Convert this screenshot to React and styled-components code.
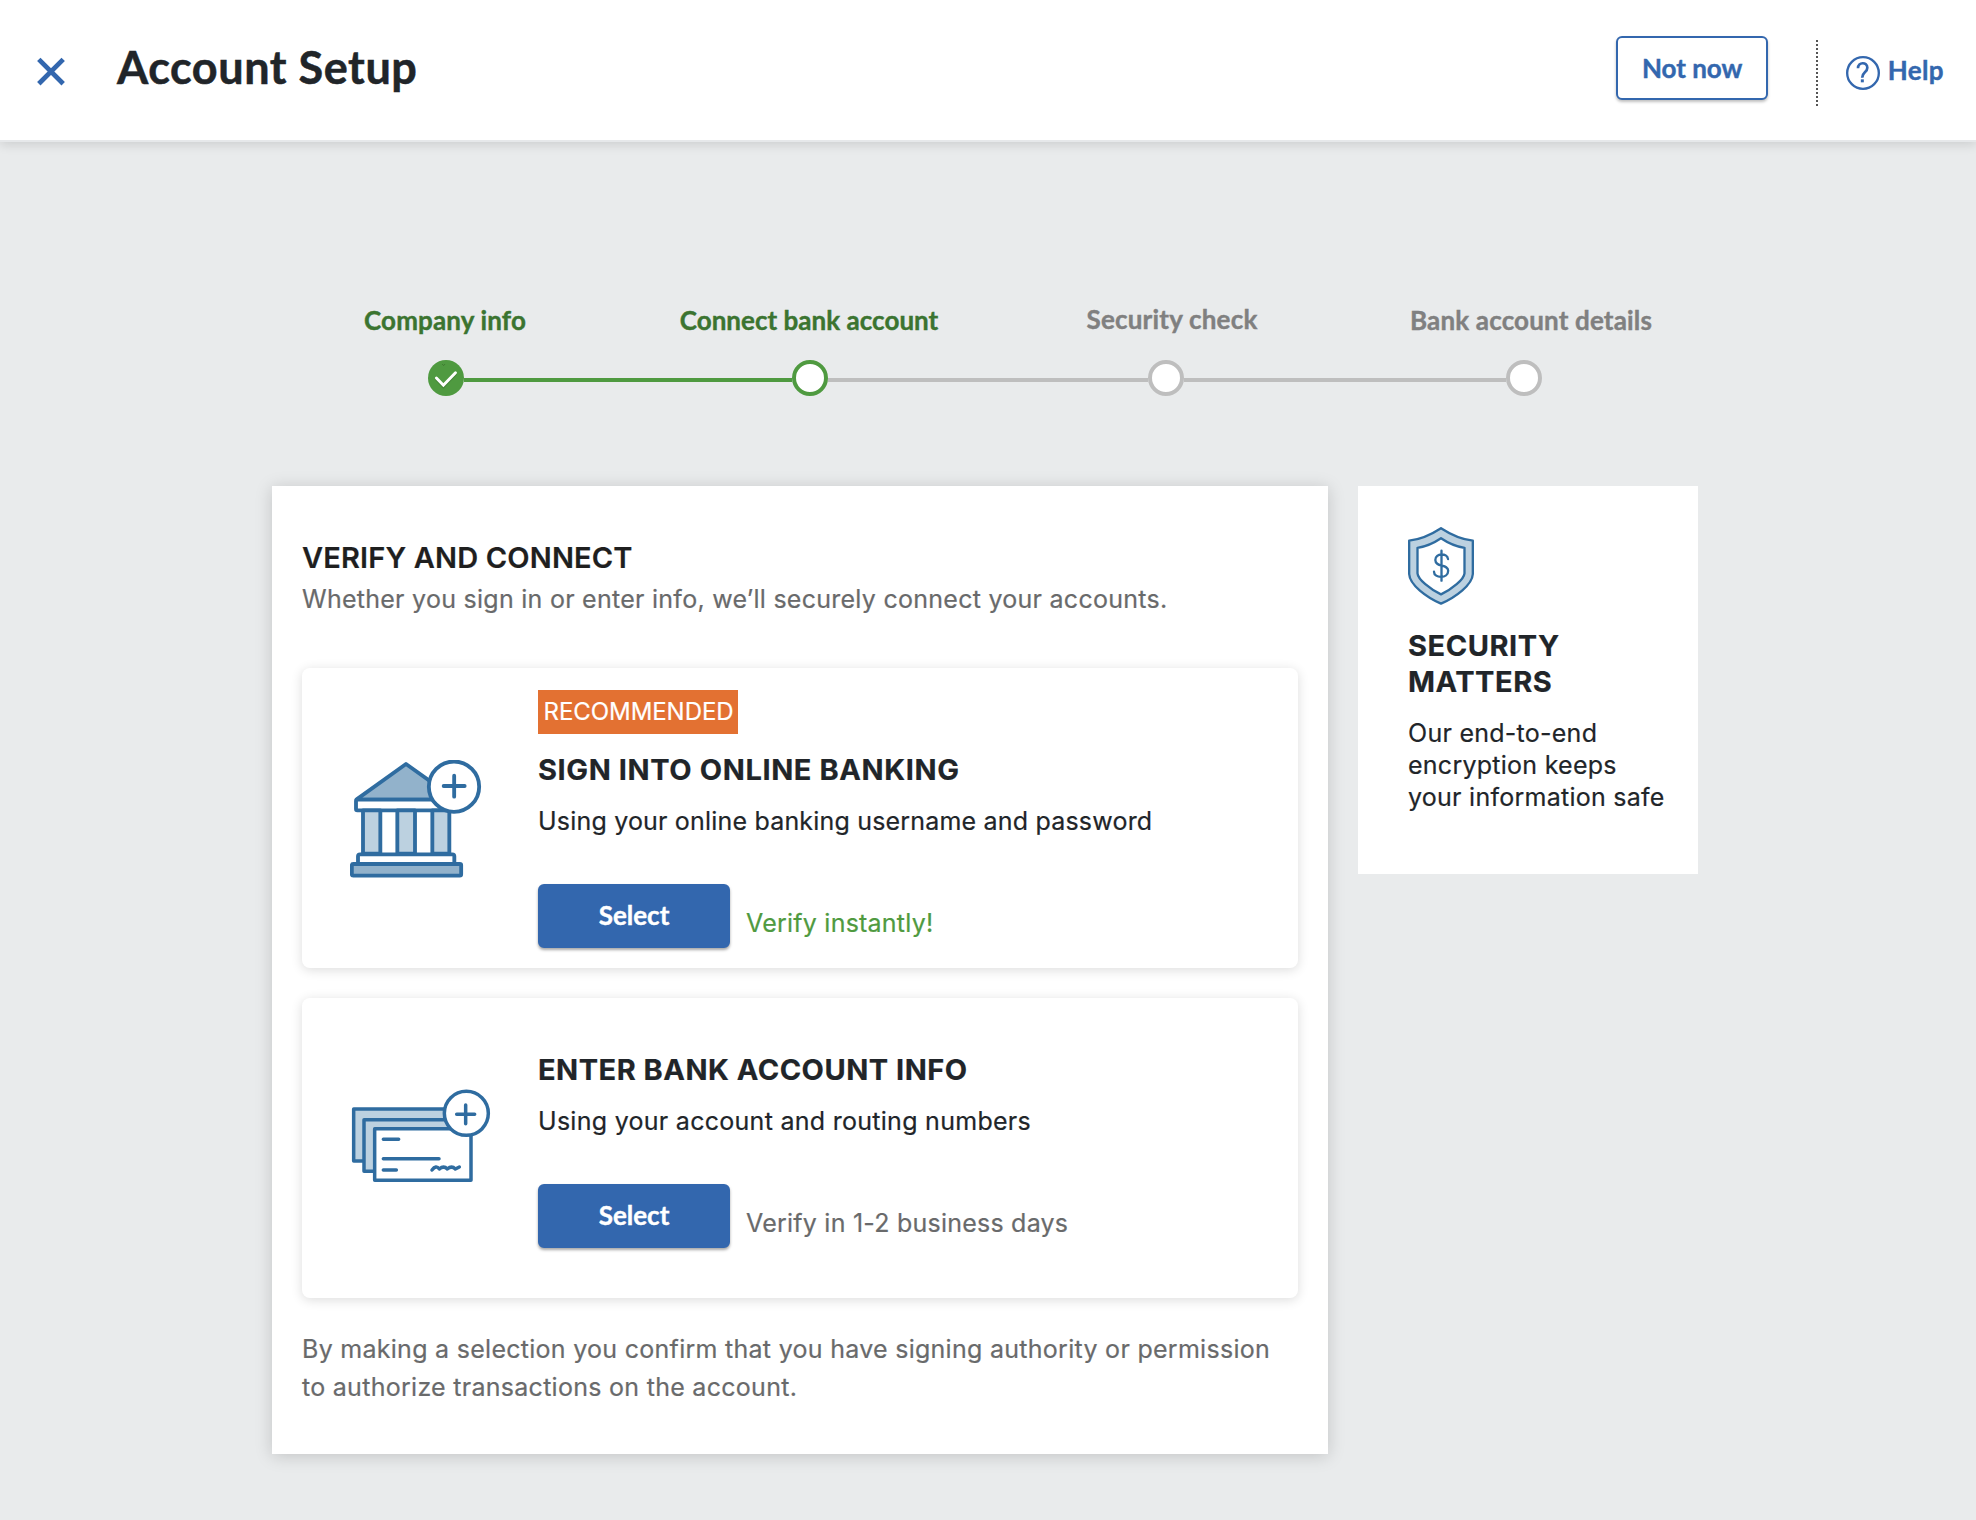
import React, { Fragment } from "react";
import styled, { createGlobalStyle, css } from "styled-components";

const color = {
  page: "#e9ebec",
  ink: "#212529",
  muted: "#696a6b",
  blue: "#3367ae",
  green: "#4f9a40",
  greenDark: "#3b7430",
  rail: "#bebebe",
  railText: "#808080",
  orange: "#e37132",
  iconLine: "#2f6ca0",
  iconMid: "#92b2cb",
  iconLight: "#bcd1e0",
};

const lato = `Lato, "Open Sans", sans-serif`;
const inter = `Inter, "Liberation Sans", sans-serif`;

const GlobalStyle = createGlobalStyle`
  * { box-sizing: border-box; }
  body { margin: 0; background: ${color.page}; }
  h1, h2, h3, p, ol { margin: 0; padding: 0; }
  button { font: inherit; cursor: pointer; }
  svg { display: block; flex: none; }
`;

const Page = styled.div`
  min-height: 1520px;
  background: ${color.page};
  color: ${color.ink};
  font-family: ${inter};
  -webkit-text-stroke: 0.2px;
`;

/* ---------- Header ---------- */

const Header = styled.header`
  display: flex;
  align-items: flex-start;
  height: 142px;
  padding: 0 32px 0 37px;
  background: #fff;
  border-bottom: 2px solid #e6e8ea;
  box-shadow: 0 3px 10px rgba(0, 0, 0, 0.12);
`;

const CloseButton = styled.button`
  margin: 57px 0 0;
  padding: 0;
  border: 0;
  background: none;
`;

const PageTitle = styled.h1`
  margin: 40px auto 0 52px;
  font: 700 45px/54px ${lato};
  letter-spacing: 0.55px;
  -webkit-text-stroke: 0.5px;
`;

const buttonBase = css`
  height: 64px;
  padding: 0 0 0 1px;
  border: 2px solid ${color.blue};
  border-radius: 6px;
  font: 700 26px/32px ${lato};
  -webkit-text-stroke: 0.4px;
`;

const OutlineButton = styled.button`
  ${buttonBase}
  width: 152px;
  margin-top: 36px;
  background: #fff;
  color: ${color.blue};
  box-shadow: 0 2px 3px rgba(0, 0, 0, 0.25);
`;

const SelectButton = styled.button`
  ${buttonBase}
  width: 192px;
  padding: 0 0 3px;
  background: ${color.blue};
  color: #fff;
  box-shadow: 0 2px 3px rgba(0, 0, 0, 0.35);
`;

const Divider = styled.span`
  width: 2px;
  height: 66px;
  margin: 40px 28px 0 48px;
  background: repeating-linear-gradient(#555 0 2px, transparent 2px 4px);
`;

const HelpLink = styled.a`
  display: flex;
  gap: 8px;
  margin-top: 54px;
  color: ${color.blue};
  font: 700 26px/32px ${lato};
  letter-spacing: 0.4px;
  -webkit-text-stroke: 0.4px;

  svg { margin-top: 2px; }
`;

/* ---------- Stepper ---------- */

const Stepper = styled.ol`
  display: flex;
  align-items: flex-start;
  list-style: none;
  margin: 162px 0 0 428px;
`;

const Step = styled.li`
  display: flex;
  flex-direction: column;
  align-items: center;
  flex: none;
  width: 36px;
`;

const StepLabel = styled.span`
  margin-top: ${(p) => -(p.$lift || 0)}px;
  margin-bottom: ${(p) => 24 + (p.$lift || 0)}px;
  margin-left: ${(p) => (p.$nudge || 0) * 2}px;
  color: ${(p) => (p.$reached ? color.greenDark : color.railText)};
  font: 700 26px/32px ${lato};
  letter-spacing: ${(p) => p.$tracking}px;
  white-space: nowrap;
  -webkit-text-stroke: 0.4px;
`;

const StepDot = styled.span`
  display: block;
  width: 36px;
  height: 36px;
  border: 4px solid ${(p) => (p.$reached ? color.green : color.rail)};
  border-radius: 50%;
  background: #fff;
`;

const Connector = styled.li`
  flex: none;
  width: ${(p) => p.$width}px;
  height: 4px;
  margin-top: 74px;
  background: ${(p) => (p.$reached ? color.green : color.rail)};
`;

/* ---------- Panels ---------- */

const Columns = styled.main`
  display: flex;
  align-items: flex-start;
  gap: 30px;
  margin: 90px 0 0 272px;
`;

const Panel = styled.section`
  width: 1056px;
  height: 968px;
  padding: 54px 30px 0;
  background: #fff;
  box-shadow: 0 2px 16px rgba(0, 0, 0, 0.17);
`;

const Heading = styled.h2`
  color: #1f1f1f;
  font: 600 29px/36px ${inter};
  letter-spacing: 0.16px;
`;

const Text = styled.p`
  color: ${(p) => p.$color || color.ink};
  font: 400 25px/32px ${inter};
  letter-spacing: ${(p) => p.$tracking ?? 0.23}px;
  white-space: nowrap;
`;

const Intro = styled(Text)`
  margin: 7px 0 53px;
`;

const Disclaimer = styled(Text)`
  margin-top: 32px;
  line-height: 38px;
`;

const OptionCard = styled.article`
  display: flex;
  align-items: flex-start;
  height: 300px;
  border-radius: 8px;
  background: #fff;
  box-shadow: 0 2px 12px rgba(0, 0, 0, 0.14);

  & + & { margin-top: 30px; }
`;

const OptionIcon = styled.div`
  flex: none;
  width: 236px;
  padding: ${(p) => p.$top}px 0 0 48px;
`;

const OptionBody = styled.div`
  padding-top: ${(p) => (p.$badged ? 22 : 54)}px;
`;

const Badge = styled.span`
  display: flex;
  align-items: center;
  width: 200px;
  height: 44px;
  margin-bottom: 18px;
  padding: 0 0 2px 5.5px;
  background: ${color.orange};
  color: #fff;
  font: 400 24px/29px ${inter};
  letter-spacing: -0.06px;
`;

const OptionTitle = styled.h3`
  margin-bottom: 17px;
  font: 700 29px/36px ${inter};
  letter-spacing: ${(p) => p.$tracking}px;
  white-space: nowrap;
`;

const OptionAction = styled.div`
  display: flex;
  align-items: flex-start;
  gap: 16px;
  margin-top: 47px;

  ${Text} { margin-top: 23px; }
`;

const SideCard = styled.aside`
  width: 340px;
  height: 388px;
  padding: 41px 0 0 50px;
  background: #fff;
`;

const SideTitle = styled(OptionTitle)`
  margin-top: 23px;
`;

/* ---------- Drawings ---------- */

const CloseIcon = () => (
  <svg width="28" height="29" viewBox="0 0 28 29" fill="none" stroke={color.blue} strokeWidth="4.8">
    <path d="M1.8 2.4 26.2 26.8M26.2 2.4 1.8 26.8" />
  </svg>
);

const HelpIcon = () => (
  <svg width="34" height="34" viewBox="0 0 102 102" fill="none" stroke={color.blue}>
    <circle cx="51" cy="51" r="47.5" strokeWidth="7" />
    <path d="M36 37C36 17 64 17 64 35 64 50 48.500 48 48.500 65" strokeWidth="8" />
    <path d="M44.500 74.500h9" strokeWidth="9" />
  </svg>
);

const CheckDot = () => (
  <svg width="36" height="36" viewBox="0 0 36 36" fill="none" strokeWidth="2.900" strokeLinecap="round">
    <circle cx="18" cy="18" r="18" fill={color.green} />
    <path d="M8.400 19.200 15.400 26.600 27.500 14" stroke="#3a742f" opacity=".6" />
    <path d="M14.600 4.500 15.600 5.500 16.600 4.500" stroke="#3a742f" strokeWidth="1" />
    <path d="M8.400 18 15.400 25.200 27.500 12.700" stroke="#fff" />
  </svg>
);

const BankIcon = () => (
  <svg width="132" height="118" viewBox="60 90 396 354" fill="#fff" stroke={color.iconLine} strokeWidth="11.500" strokeLinecap="round" strokeLinejoin="round">
    <path d="M80 208 228 102 378 209Z" fill={color.iconMid} />
    <rect x="78" y="209" width="296" height="32" rx="4" />
    <path d="M99 241h52v130H99ZM202 241h53v130h-53ZM307 241h51v130h-51Z" fill={color.iconLight} />
    <path d="M84 402V379q0-6 6-6H367q6 0 6 6V402Z" />
    <rect x="65.500" y="402" width="328" height="35" rx="4" fill={color.iconMid} />
    <circle cx="372" cy="170" r="75.500" />
    <path d="M341 168h63M372.500 137v63" />
  </svg>
);

const ChecksIcon = () => (
  <svg width="142" height="96" viewBox="60 54 426 288" fill="#fff" stroke={color.iconLine} strokeWidth="10.500" strokeLinecap="round" strokeLinejoin="round">
    <rect x="71" y="117" width="290" height="156" fill={color.iconLight} />
    <rect x="102" y="149" width="290" height="155" fill={color.iconLight} />
    <rect x="134" y="176" width="289" height="155" />
    <path d="M160 208h46M160 266h167M160 300h39" />
    <path d="M306 300 Q318 284 328 297 Q341 286 352 297 Q365 286 376 297 L388 291" fill="none" />
    <circle cx="409" cy="130" r="66" />
    <path d="M380 132.500h54M407 105v56" />
  </svg>
);

const ShieldIcon = () => (
  <svg width="66" height="78" viewBox="234 171 198 234" fill="none" stroke={color.iconLine} strokeWidth="7" strokeLinecap="round" strokeLinejoin="round">
    <path d="M333 174.500C300 196 270 208 237.500 212V312C239 345 290 382 333 401 376 382 427 345 428.500 312V212C396 208 366 196 333 174.500Z" fill={color.iconLight} />
    <path d="M333 204.500C310 220 290 229 262.500 233.500V310C264 328 300 358 333 373 366 358 402 328 403.500 310V233.500C376 229 356 220 333 204.500Z" fill="#fff" />
    <path d="M354 267C352 248 316 249 316 270 316 293 354.500 281 354.500 302 354.500 327 312 326 312 305M334.500 242v90" />
  </svg>
);

/* ---------- Content ---------- */

const steps = [
  { label: "Company info", done: true, reached: true, nudge: -1, tracking: 0.15, line: 328 },
  { label: "Connect bank account", reached: true, nudge: -1, tracking: 0.03, line: 320 },
  { label: "Security check", nudge: 6, tracking: 0.2, lift: 1, line: 322 },
  { label: "Bank account details", nudge: 7, tracking: 0.16 },
];

const options = [
  {
    badge: "RECOMMENDED",
    icon: <BankIcon />,
    iconTop: 92,
    title: "SIGN INTO ONLINE BANKING",
    tracking: 0.6,
    text: "Using your online banking username and password",
    textTracking: 0.19,
    note: "Verify instantly!",
    noteColor: color.green,
  },
  {
    icon: <ChecksIcon />,
    iconTop: 90,
    title: "ENTER BANK ACCOUNT INFO",
    tracking: 0.5,
    text: "Using your account and routing numbers",
    textTracking: 0.28,
    note: "Verify in 1-2 business days",
    noteColor: color.muted,
  },
];

export default function App() {
  return (
    <Page>
      <GlobalStyle />
      <Header>
        <CloseButton aria-label="Close"><CloseIcon /></CloseButton>
        <PageTitle>Account Setup</PageTitle>
        <OutlineButton>Not now</OutlineButton>
        <Divider />
        <HelpLink><HelpIcon />Help</HelpLink>
      </Header>

      <Stepper>
        {steps.map((s) => (
          <Fragment key={s.label}>
            <Step>
              <StepLabel $reached={s.reached} $nudge={s.nudge} $lift={s.lift} $tracking={s.tracking}>
                {s.label}
              </StepLabel>
              {s.done ? <CheckDot /> : <StepDot $reached={s.reached} />}
            </Step>
            {s.line && <Connector $width={s.line} $reached={s.done} />}
          </Fragment>
        ))}
      </Stepper>

      <Columns>
        <Panel>
          <Heading>VERIFY AND CONNECT</Heading>
          <Intro $color={color.muted} $tracking={0.265}>
            Whether you sign in or enter info, we’ll securely connect your accounts.
          </Intro>
          {options.map((o) => (
            <OptionCard key={o.title}>
              <OptionIcon $top={o.iconTop}>{o.icon}</OptionIcon>
              <OptionBody $badged={Boolean(o.badge)}>
                {o.badge && <Badge>{o.badge}</Badge>}
                <OptionTitle $tracking={o.tracking}>{o.title}</OptionTitle>
                <Text $tracking={o.textTracking}>{o.text}</Text>
                <OptionAction>
                  <SelectButton>Select</SelectButton>
                  <Text $color={o.noteColor}>{o.note}</Text>
                </OptionAction>
              </OptionBody>
            </OptionCard>
          ))}
          <Disclaimer $color={color.muted} $tracking={0.28}>
            By making a selection you confirm that you have signing authority or permission
            <br />
            to authorize transactions on the account.
          </Disclaimer>
        </Panel>

        <SideCard>
          <ShieldIcon />
          <SideTitle $tracking={0.55}>
            SECURITY
            <br />
            MATTERS
          </SideTitle>
          <Text $tracking={0.26}>
            Our end-to-end
            <br />
            encryption keeps
            <br />
            your information safe
          </Text>
        </SideCard>
      </Columns>
    </Page>
  );
}
